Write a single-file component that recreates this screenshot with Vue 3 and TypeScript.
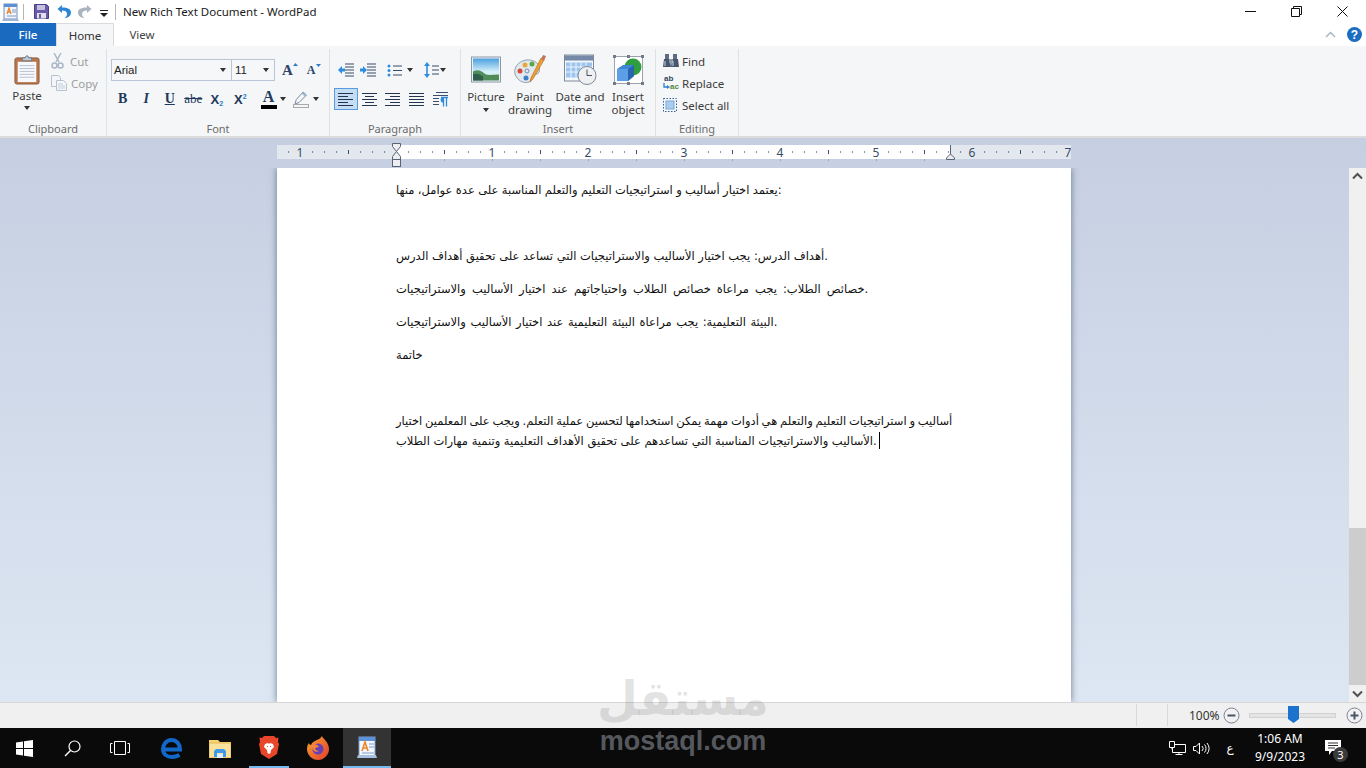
<script setup lang="ts">
const rulerX = (x: number) => x - 277
const numbers = [
  { n: 1, x: 300 }, { n: 1, x: 492 }, { n: 2, x: 588 }, { n: 3, x: 684 },
  { n: 4, x: 780 }, { n: 5, x: 876 }, { n: 6, x: 972 }, { n: 7, x: 1068 }
]
const dots: number[] = []
const longTicks: number[] = []
for (let x = 288; x < 1068; x += 12) {
  const rel = x - 396
  if (rel % 96 === 0) continue
  if (rel % 48 === 0) longTicks.push(x)
  else dots.push(x)
}
const tabStops: number[] = []
for (let x = 444; x < 950; x += 48) tabStops.push(x)
</script>

<template>
  <div class="app">
    <header class="titlebar">
      <svg class="appicon" width="17" height="18" viewBox="0 0 17 18">
        <rect x="2" y="1" width="13" height="15" fill="#f3f6fb" stroke="#6f8fc0" />
        <path d="M2 1h13v3H2z" fill="#5b8fd6" />
        <path d="M5 11l2-6 2 6M5.700 9h2.600" stroke="#e8862e" stroke-width="1.300" fill="none" />
        <path d="M10 7h4M10 9h4M5 13h9" stroke="#7d9cc8" />
        <path d="M1 16h15l1 2H0z" fill="#9db6d8" />
      </svg>
      <span class="qsep first"></span>
      <svg class="q-save" width="15" height="15" viewBox="0 0 15 15">
        <path d="M0.500 0.500h12l2 2v12h-14z" fill="#6a5aa8" stroke="#4a3d86" />
        <rect x="3" y="1" width="8" height="5" fill="#c5c0de" />
        <rect x="3" y="9" width="9" height="5.500" fill="#e1e1ea" />
        <rect x="5" y="10" width="2" height="4" fill="#6a5aa8" />
      </svg>
      <svg class="q-undo" width="14" height="15" viewBox="0 0 14 15">
        <path d="M5 1L0.500 5 5 9V6.400c3 0 5 1 5 3.600 0 1.700-1 3.200-2.500 4.200C11 14 14 12 14 8.600 14 5 10.600 3.600 5 3.600z" fill="#2f86d2" />
      </svg>
      <svg class="q-redo" width="14" height="15" viewBox="0 0 14 15">
        <path d="M9 1l4.500 4L9 9V6.400c-3 0-5 1-5 3.600 0 1.700 1 3.200 2.500 4.200C3 14 0 12 0 8.600 0 5 3.400 3.600 9 3.600z" fill="#a9b4c0" />
      </svg>
      <svg class="q-more" width="8" height="8" viewBox="0 0 8 8">
        <path d="M0 1h8v1H0zM0 4h8L4 8z" fill="#222" />
      </svg>
      <span class="qsep q2"></span>
      <span class="title">New Rich Text Document - WordPad</span>
      <div class="winctl">
        <span class="wbtn"><svg width="11" height="11" viewBox="0 0 11 11"><path d="M0 5.500h11" stroke="#111" /></svg></span>
        <span class="wbtn"><svg width="11" height="11" viewBox="0 0 11 11"><path d="M.5 2.500h8v8h-8zM2.500 2.500v-2h8v8h-2" stroke="#111" fill="none" /></svg></span>
        <span class="wbtn"><svg width="11" height="11" viewBox="0 0 11 11"><path d="M.5 .5l10 10M10.500 .5l-10 10" stroke="#111" /></svg></span>
      </div>
    </header>

    <nav class="tabs">
      <span class="tab file">File</span>
      <span class="tab home">Home</span>
      <span class="tab view">View</span>
      <svg class="collapse" width="11" height="7" viewBox="0 0 11 7"><path d="M1 6l4.500-4.500L10 6" stroke="#a9b4c4" stroke-width="1.500" fill="none" /></svg>
      <svg class="help" width="15" height="15" viewBox="0 0 15 15">
        <circle cx="7.500" cy="7.500" r="7.500" fill="#1b6dc1" />
        <text x="7.500" y="11.500" text-anchor="middle" class="helpq">?</text>
      </svg>
    </nav>

    <section class="ribbon">
      <div class="group g-clip">
        <div class="body clip-body">
          <div class="paste">
            <svg width="26" height="30" viewBox="0 0 28 31" preserveAspectRatio="none">
              <rect x="1" y="3" width="26" height="27" rx="2" fill="#b9764e" stroke="#8d5a3c" />
              <rect x="4" y="7" width="20" height="21" fill="#f7f8fb" />
              <path d="M6 11h16M6 14h16M6 17h16M6 20h16M6 23h16" stroke="#b5bfd2" />
              <path d="M9 6V3h3l1-2h2l1 2h3v3z" fill="#c4cad4" stroke="#6c7686" />
            </svg>
            <span class="lbl paste-lbl">Paste</span>
            <i class="arrow"></i>
          </div>
          <div class="clip-small">
            <div class="smallrow">
              <svg width="14" height="16" viewBox="0 0 14 16">
                <path d="M3 0l5 9M10 0L5 9" stroke="#aab7c8" stroke-width="1.500" />
                <circle cx="3.500" cy="12.500" r="2.500" fill="none" stroke="#aab7c8" stroke-width="1.500" />
                <circle cx="9.500" cy="12.500" r="2.500" fill="none" stroke="#aab7c8" stroke-width="1.500" />
              </svg>
              <span class="dis cut-t">Cut</span>
            </div>
            <div class="smallrow">
              <svg width="16" height="16" viewBox="0 0 16 16">
                <path d="M.5 .5h7l2 2v9h-9z" fill="#f4f6f9" stroke="#b7c2d0" />
                <path d="M5.500 5.500h7l3 3v7h-10z" fill="#f4f6f9" stroke="#b7c2d0" />
                <path d="M7 9h5M7 11h7M7 13h7" stroke="#c6d0dc" />
              </svg>
              <span class="dis copy-t">Copy</span>
            </div>
          </div>
        </div>
        <div class="glabel">Clipboard</div>
      </div>

      <div class="group g-font">
        <div class="body font-body">
          <div class="font-row">
            <div class="combo c-font"><span>Arial</span><i class="arrow"></i></div>
            <div class="combo c-size"><span>11</span><i class="arrow"></i></div>
            <span class="ab grow">A<svg width="5" height="3" viewBox="0 0 5 3"><path d="M0 3l2.500-3L5 3z" fill="#2b7cc9" /></svg></span>
            <span class="ab shrink">A<svg width="5" height="3" viewBox="0 0 5 3"><path d="M0 0l2.500 3L5 0z" fill="#2b7cc9" /></svg></span>
          </div>
          <div class="font-row row2">
            <span class="fb b">B</span>
            <span class="fb i">I</span>
            <span class="fb u">U</span>
            <span class="fb s">abe</span>
            <span class="fb x">X<small class="sub">2</small></span>
            <span class="fb x">X<small class="sup">2</small></span>
            <span class="colorA"><span class="cA">A</span><em class="cbar"></em></span>
            <i class="arrow a-c"></i>
            <svg class="high" width="17" height="17" viewBox="0 0 17 17">
              <path d="M10 1l3.500 3L6 11.500 2 13l1.200-4.300z" fill="#f3f5f8" stroke="#7c8da3" />
              <path d="M10 1l3.500 3-1.500 1.500L8.500 2.500z" fill="#9bb4d0" />
              <rect x=".5" y="13.500" width="15" height="3" fill="#f5f6f7" stroke="#a9a9a9" />
            </svg>
            <i class="arrow a-h"></i>
          </div>
        </div>
        <div class="glabel">Font</div>
      </div>

      <div class="group g-para">
        <div class="body para-body">
          <div class="para-row">
            <svg class="ic i1" width="16" height="14" viewBox="0 0 16 14">
              <path d="M7 1h9M7 4h9M7 7h9M7 10h9M7 13h9" stroke="#364b6b" />
              <path d="M0 7l4-4v2.500h3v3H4V11z" fill="#2d8ce0" />
            </svg>
            <svg class="ic i2" width="16" height="14" viewBox="0 0 16 14">
              <path d="M7 1h9M7 4h9M7 7h9M7 10h9M7 13h9" stroke="#364b6b" />
              <path d="M7 7L3 3v2.500H0v3h3V11z" fill="#2d8ce0" />
            </svg>
            <svg class="ic i3" width="15" height="13" viewBox="0 0 15 13">
              <circle cx="2" cy="2" r="1.500" fill="#2d8ce0" /><circle cx="2" cy="6.500" r="1.500" fill="#2d8ce0" /><circle cx="2" cy="11" r="1.500" fill="#2d8ce0" />
              <path d="M6 2h9M6 6.500h9M6 11h9" stroke="#364b6b" />
            </svg>
            <i class="arrow a-l"></i>
            <svg class="ic i4" width="15" height="16" viewBox="0 0 15 16">
              <path d="M3 0l3 4H0zM3 16l3-4H0z" fill="#2d8ce0" /><path d="M2.200 4h1.600v8H2.200z" fill="#2d8ce0" />
              <path d="M8 4h7M8 8h7M8 12h7" stroke="#364b6b" />
            </svg>
            <i class="arrow a-s"></i>
          </div>
          <div class="para-row row2">
            <span class="align active"><svg width="15" height="13" viewBox="0 0 15 13"><path d="M0 .5h15M0 3.500h10M0 6.500h15M0 9.500h10M0 12.500h15" stroke="#26354f" /></svg></span>
            <span class="align"><svg width="15" height="13" viewBox="0 0 15 13"><path d="M0 .5h15M3 3.500h9M0 6.500h15M3 9.500h9M0 12.500h15" stroke="#26354f" /></svg></span>
            <span class="align"><svg width="15" height="13" viewBox="0 0 15 13"><path d="M0 .5h15M5 3.500h10M0 6.500h15M5 9.500h10M0 12.500h15" stroke="#26354f" /></svg></span>
            <span class="align"><svg width="15" height="13" viewBox="0 0 15 13"><path d="M0 .5h15M0 3.500h15M0 6.500h15M0 9.500h15M0 12.500h15" stroke="#26354f" /></svg></span>
            <span class="align rtl"><svg width="15" height="15" viewBox="0 0 15 15"><path d="M3 .5h12M0 3.500h15M0 6.500h6M0 9.500h6M0 12.500h6" stroke="#3d4f6b" /><path d="M8 5.500h7M10.500 5.500v9M13.500 5.500v9M10.500 5.500a2 2 0 000 4.500" stroke="#2d8ce0" stroke-width="1.300" fill="#2d8ce0" /></svg></span>
          </div>
        </div>
        <div class="glabel">Paragraph</div>
      </div>

      <div class="group g-ins">
        <div class="body ins-body">
          <div class="big w44">
            <svg width="30" height="27" viewBox="0 0 30 27">
              <defs>
                <linearGradient id="sky" x1="0" y1="0" x2="0" y2="1"><stop offset="0" stop-color="#4a9fe0" /><stop offset=".6" stop-color="#d6f0f8" /></linearGradient>
              </defs>
              <rect x=".5" y=".5" width="29" height="25" fill="#eef1f5" stroke="#8c97a6" />
              <rect x="2" y="2" width="26" height="22" fill="url(#sky)" />
              <path d="M2 15c5-3 9 0 13 3 4 1 9 0 13 0v6H2z" fill="#4f8c5a" />
              <path d="M2 18c4-2 7 0 10 2v4H2z" fill="#2f5d4e" />
            </svg>
            <span class="lbl">Picture</span>
            <i class="arrow"></i>
          </div>
          <div class="big w44">
            <svg width="34" height="32" viewBox="0 0 34 32">
              <path d="M2 20C0 11 9 5 17 6c7 1 11 6 9 12-1 3-5 2-7 4-1 2 0 5-3 6-6 2-12-2-14-8z" fill="#e2e8ee" stroke="#8fa1b4" />
              <circle cx="7" cy="17" r="2.500" fill="#d4483a" /><circle cx="12" cy="11" r="2.500" fill="#e6a93a" /><circle cx="19" cy="10" r="2.500" fill="#5aa845" /><circle cx="13" cy="24" r="2.500" fill="#3f7ec9" /><circle cx="14" cy="17" r="2" fill="none" stroke="#6f8fb5" />
              <path d="M28 4L18 24l-1 4 3-3L31 6z" fill="#ef9f2d" stroke="#b6742a" stroke-width=".7" />
              <path d="M28 5l2-4 3 1-2 5z" fill="#c2775d" />
            </svg>
            <span class="lbl">Paint<br />drawing</span>
          </div>
          <div class="big w56">
            <svg width="33" height="31" viewBox="0 0 33 31">
              <rect x=".5" y=".5" width="29" height="26" fill="#f3f6fa" stroke="#7d8999" />
              <rect x="1" y="1" width="28" height="5" fill="#7589a8" />
              <path d="M2 8h26v15H2z" fill="#9cc4ee" />
              <path d="M2 12.500h26M2 17.500h26M7 8v15M12 8v15M17 8v15M22 8v15" stroke="#eef5fc" />
              <circle cx="23" cy="21" r="9" fill="#eef0f2" stroke="#7e8895" />
              <path d="M23 15v6h5" stroke="#46505e" fill="none" />
            </svg>
            <span class="lbl">Date and<br />time</span>
          </div>
          <div class="big w40">
            <svg width="31" height="30" viewBox="0 0 31 30">
              <rect x="1.500" y="1.500" width="28" height="27" fill="#fff" stroke="#9aa3ae" />
              <path d="M0 0h3v3H0zM28 0h3v3h-3zM0 27h3v3H0zM28 27h3v3h-3zM14 0h3v3h-3zM14 27h3v3h-3z" fill="#727b87" />
              <circle cx="20" cy="12" r="8.500" fill="#2f9e3f" />
              <path d="M4 14l6-4h11v11l-6 5H4z" fill="#3f86d8" />
              <path d="M4 14h11v12H4z" fill="#5c9fe6" />
              <path d="M15 14l6-4v11l-6 5z" fill="#2a64ae" />
            </svg>
            <span class="lbl">Insert<br />object</span>
          </div>
        </div>
        <div class="glabel">Insert</div>
      </div>

      <div class="group g-edit">
        <div class="body edit-body">
          <div class="edit-row">
            <svg width="16" height="14" viewBox="0 0 16 14">
              <rect x="2" y="0" width="4" height="5" fill="#5d6c80" /><rect x="10" y="0" width="4" height="5" fill="#5d6c80" />
              <path d="M1 5h6l1 8H0zM9 5h6l1 8H8z" fill="#46566c" /><path d="M6 5h4v4H6z" fill="#8b98a9" />
              <path d="M2 7v5M10 7v5" stroke="#c9d3de" />
            </svg>
            <span>Find</span>
          </div>
          <div class="edit-row">
            <span class="repl">
              <b class="r-ab">ab</b><b class="r-ac">ac</b>
              <svg class="r-arrow" width="7" height="7" viewBox="0 0 7 7"><path d="M1 0v4h3" stroke="#2d7fd0" stroke-width="1.300" fill="none" /><path d="M4 2l3 2-3 2z" fill="#2d7fd0" /></svg>
            </span>
            <span>Replace</span>
          </div>
          <div class="edit-row">
            <svg width="14" height="14" viewBox="0 0 14 14">
              <rect x=".5" y=".5" width="13" height="13" fill="none" stroke="#2d5f9e" stroke-dasharray="1.500 1.500" />
              <rect x="3" y="3" width="8" height="8" fill="#a8cdf0" stroke="#7ba7d5" />
            </svg>
            <span class="sel-t">Select all</span>
          </div>
        </div>
        <div class="glabel">Editing</div>
      </div>
    </section>

    <main class="workspace">
      <div class="ruler-row">
        <svg class="ruler" width="794" height="30" viewBox="0 0 794 30">
          <rect x="0" y="7" width="794" height="14" fill="#e3e7ee" />
          <rect x="119" y="7" width="554" height="14" fill="#fff" />
          <circle v-for="d in dots" :key="'d' + d" :cx="rulerX(d) + .5" cy="14" r=".7" fill="#4c5a73" />
          <rect v-for="t in longTicks" :key="'t' + t" :x="rulerX(t)" y="12" width="1" height="4" fill="#3c4c6a" />
          <rect v-for="s in tabStops" :key="'s' + s" :x="rulerX(s)" y="21" width="1" height="2" fill="#9aa6b8" />
          <text v-for="(m, i) in numbers" :key="'n' + i" :x="rulerX(m.x)" y="18.500" text-anchor="middle" class="rnum">{{ m.n }}</text>
          <path d="M115.500 5.500h8v3l-4 5-4-5zM119.500 13.500l4 5v3h-8v-3z" fill="#eceef2" stroke="#586374" />
          <rect x="115.500" y="21.500" width="8" height="7" fill="#eceef2" stroke="#586374" />
          <path d="M673.500 7v9l4 4v1.500h-8V20l4-4" fill="#eceef2" stroke="#586374" />
        </svg>
      </div>
      <div class="doc-row">
        <div class="doc-area">
          <article class="page">
            <p class="l1">يعتمد اختيار أساليب و استراتيجيات التعليم والتعلم المناسبة على عدة عوامل، منها:</p>
            <p>&nbsp;</p>
            <p>أهداف الدرس: يجب اختيار الأساليب والاستراتيجيات التي تساعد على تحقيق أهداف الدرس.</p>
            <p class="l3">خصائص الطلاب: يجب مراعاة خصائص الطلاب واحتياجاتهم عند اختيار الأساليب والاستراتيجيات.</p>
            <p class="l4">البيئة التعليمية: يجب مراعاة البيئة التعليمية عند اختيار الأساليب والاستراتيجيات.</p>
            <p>خاتمة</p>
            <p>&nbsp;</p>
            <p class="last"><span class="l6">أساليب و استراتيجيات التعليم والتعلم هي أدوات مهمة يمكن استخدامها لتحسين عملية التعلم. ويجب على المعلمين اختيار</span><br />الأساليب والاستراتيجيات المناسبة التي تساعدهم على تحقيق الأهداف التعليمية وتنمية مهارات الطلاب.<i class="caret"></i></p>
          </article>
        </div>
        <aside class="vscroll">
          <svg width="17" height="17" viewBox="0 0 17 17"><path d="M4 10.500l4.500-4.500 4.500 4.500" stroke="#505050" stroke-width="2" fill="none" /></svg>
          <div class="track"><div class="thumb"></div></div>
          <svg width="17" height="17" viewBox="0 0 17 17"><path d="M4 6.500l4.500 4.500 4.500-4.500" stroke="#505050" stroke-width="2" fill="none" /></svg>
        </aside>
      </div>
    </main>

    <footer class="status">
      <span class="sdiv d1"></span>
      <span class="sdiv d2"></span>
      <span class="zoomtxt">100%</span>
      <svg class="zbtn" width="17" height="17" viewBox="0 0 17 17"><circle cx="8.500" cy="8.500" r="7.500" fill="#f2f2f4" stroke="#7c8290" /><path d="M4.500 8.500h8" stroke="#4a5464" stroke-width="2" /></svg>
      <div class="slider"><svg class="sthumb" width="11" height="17" viewBox="0 0 11 17"><path d="M0 0h11v13l-5.500 4L0 13z" fill="#1c73cd" /></svg></div>
      <svg class="zbtn" width="17" height="17" viewBox="0 0 17 17"><circle cx="8.500" cy="8.500" r="7.500" fill="#f2f2f4" stroke="#7c8290" /><path d="M4.500 8.500h8M8.500 4.500v8" stroke="#4a5464" stroke-width="2" /></svg>
    </footer>

    <div class="taskbar">
      <span class="tb start">
        <svg width="17" height="17" viewBox="0 0 17 17"><path d="M0 2.500L7 1.400V8H0zM8 1.300L17 0v8H8zM0 9h7v6.600L0 14.500zM8 9h9v8l-9-1.300z" fill="#fff" /></svg>
      </span>
      <span class="tb">
        <svg width="17" height="17" viewBox="0 0 17 17"><circle cx="10.500" cy="6.500" r="5.500" fill="none" stroke="#fff" stroke-width="1.200" /><path d="M6.500 10.500L1 16" stroke="#fff" stroke-width="1.500" /></svg>
      </span>
      <span class="tb">
        <svg width="20" height="14" viewBox="0 0 20 14"><path d="M4.500 .5h11v13h-11z" fill="none" stroke="#fff" /><path d="M2.500 2.500H.5v9h2M17.500 2.500h2v9h-2" fill="none" stroke="#fff" /></svg>
      </span>
      <span class="tb t-edge">
        <svg width="21" height="22" viewBox="0 0 21 22"><path d="M4 12.500h15C19 7 15.500 3 10.500 3 5 3 2 8 2 12c0 5.500 4 8 9 8 3 0 5.500-1 7.500-2" fill="none" stroke="#1168c8" stroke-width="4" /></svg>
      </span>
      <span class="tb t-exp">
        <svg width="22" height="19" viewBox="0 0 22 19">
          <path d="M0 1h9l2 2h11v16H0z" fill="#f6d271" />
          <rect x="0" y="4" width="22" height="15" fill="#fbe29c" stroke="#e6b84f" />
          <path d="M5 18v-6l2-2h8l2 2v6h-3v-4H8v4z" fill="#3f9be8" />
          <rect x="8" y="15" width="6" height="4" fill="#dfeffb" />
        </svg>
      </span>
      <span class="tb run">
        <svg width="20" height="24" viewBox="0 0 20 24">
          <path d="M5 1h10l2 2 2.500-.5L19 7l1 2-2 10-8 5-8-5L0 9l1-2-.5-4.500L3 3z" fill="#e8462a" />
          <path d="M6 9l3-1 1 1 1-1 3 1 1 3-3 3-.5 3L10 19l-1.500-1-.5-3-3-3z" fill="#fff" />
          <path d="M8 11l1 1M12 11l-1 1" stroke="#e8462a" />
        </svg>
      </span>
      <span class="tb t-fx">
        <svg width="24" height="24" viewBox="0 0 24 24">
          <defs><linearGradient id="fx" x1="0" y1="0" x2="1" y2="1"><stop offset="0" stop-color="#f9a52c" /><stop offset="1" stop-color="#e23d2d" /></linearGradient></defs>
          <path d="M16 0c1 3 7 6 7 13 0 6-5 11-11 11S1 19 1 13c0-3 1-5 2-6 0 1 1 2 2 2 1-3 4-4 6-5 2-1 4-2 5-4z" fill="url(#fx)" />
          <circle cx="12" cy="13" r="5.500" fill="#6a3fb5" />
          <path d="M6 9c3-2 6 0 7 2-2 0-3 1-4 1 0 2 2 3 4 3-3 2-7 0-7-6z" fill="#f7873a" />
        </svg>
      </span>
      <span class="tb active">
        <svg width="20" height="22" viewBox="0 0 20 22">
          <rect x="2" y="1" width="16" height="19" fill="#f3f6fb" stroke="#7d9dcb" />
          <path d="M2 1h16v4H2z" fill="#5e92d8" />
          <path d="M5 15l3-9 3 9M6 12h4" stroke="#e8862e" stroke-width="1.600" fill="none" />
          <path d="M12 8h5M12 11h5M5 17h12" stroke="#7d9cc8" />
          <path d="M1 19h18l1 3H0z" fill="#a8c0df" />
        </svg>
      </span>
      <div class="tray">
        <svg class="t-net" width="17" height="14" viewBox="0 0 17 14"><path d="M3.500 3.500h13v8h-13zM10 11.500v2M6.500 13.500h7" fill="none" stroke="#fff" /><path d="M.5 .5h5v6h-5zM3 6.500v2" fill="#0a0a0a" stroke="#fff" /></svg>
        <svg class="t-vol" width="17" height="13" viewBox="0 0 17 13"><path d="M.5 4.500h2.500L6.500 1v11L3 8.500H.5z" fill="none" stroke="#fff" /><path d="M9 4a3.500 3.500 0 010 5M11.500 2.500a6 6 0 010 8M14 1a9 9 0 010 11" fill="none" stroke="#fff" /></svg>
        <span class="t-lang">ع</span>
        <div class="clock"><span>1:06 AM</span><span>9/9/2023</span></div>
        <div class="notif">
          <svg width="16" height="15" viewBox="0 0 16 15"><path d="M0 0h16v11H7l-3 4v-4H0z" fill="#fff" /><path d="M3 3h10M3 5.500h10M3 8h7" stroke="#333" /></svg>
          <span class="badge">3</span>
        </div>
      </div>
    </div>

    <div class="wm">
      <span class="wm-ar">مستقل</span>
      <span class="wm-en">mostaql.com</span>
    </div>
  </div>
</template>

<style scoped>
.app {
  position: relative;
  width: 1366px;
  height: 768px;
  display: flex;
  flex-direction: column;
  overflow: hidden;
  background: #fff;
  font-family: "Noto Sans", "Open Sans", sans-serif;
  font-size: 11.500px;
  color: #3c3c3c;
}
i, em { display: block; font-style: normal; }
.titlebar { height: 23px; display: flex; align-items: center; flex: none; background: #fff; }
.appicon { margin-left: 2px; }
.qsep { width: 1px; height: 16px; background: #b5b5b5; margin-left: 8px; }
.qsep.first { margin-left: 4px; }
.qsep.q2 { margin-left: 7px; }
.q-save { margin-left: 10px; }
.q-undo { margin-left: 8px; }
.q-redo { margin-left: 7px; }
.q-more { margin-left: 8px; margin-top: 3px; }
.title { margin-left: 7px; font-size: 11.500px; color: #1a1a1a; white-space: nowrap; }
.winctl { margin-left: auto; display: flex; padding-right: 1px; }
.wbtn { width: 46px; height: 23px; display: flex; align-items: center; justify-content: center; }

.tabs { height: 23px; display: flex; align-items: stretch; flex: none; background: #fff; position: relative; }
.tab { display: flex; align-items: center; justify-content: center; font-size: 11.500px; }
.file { width: 56px; background: #1a6bc0; color: #fff; font-weight: 500; }
.home { width: 58px; background: #f5f6f7; border: 1px solid #dadbdc; border-bottom: 0; box-sizing: border-box; color: #333; }
.view { width: 56px; color: #444; }
.collapse { margin-left: auto; align-self: center; margin-right: 11px; }
.help { align-self: center; margin-right: 4px; }
.helpq { font: bold 12px "Liberation Sans", sans-serif; fill: #fff; }

.ribbon {
  height: 92px;
  flex: none;
  display: flex;
  background: #f5f6f7;
  border-bottom: 2px solid #dcdcdc;
  box-sizing: border-box;
}
.group { display: flex; flex-direction: column; box-sizing: border-box; border-right: 1px solid #e0e1e3; margin-top: 3px; }
.g-clip { width: 107px; }
.g-font { width: 223px; }
.g-para { width: 131px; }
.g-ins { width: 195px; }
.g-edit { width: 83px; }
.body { flex: 1; min-height: 0; }
.glabel { height: 14px; line-height: 14px; text-align: center; color: #6c6c6c; font-size: 11px; white-space: nowrap; }
.arrow { width: 0; height: 0; border-left: 3.500px solid transparent; border-right: 3.500px solid transparent; border-top: 4px solid #333; }
.lbl { line-height: 13px; text-align: center; white-space: nowrap; color: #3c3c3c; }

.clip-body { display: flex; padding-left: 8px; }
.paste { width: 38px; display: flex; flex-direction: column; align-items: center; padding-top: 6px; }
.paste-lbl { margin-top: 4px; }
.paste .arrow { margin-top: 4px; }
.clip-small { margin-left: 5px; padding-top: 4px; display: flex; flex-direction: column; gap: 6px; }
.smallrow { display: flex; align-items: center; gap: 4px; height: 16px; }
.dis { color: #9d9d9d; }
.cut-t { margin-left: 1px; }

.font-body { padding: 10px 0 0 4px; display: flex; flex-direction: column; gap: 7px; }
.font-row { display: flex; align-items: center; height: 22px; }
.combo {
  height: 22px; box-sizing: border-box; border: 1px solid #b9c4d6; background: #f6f7f8;
  display: flex; align-items: center; justify-content: space-between; padding: 0 5px 0 2px;
  font: 11.500px "Liberation Sans", sans-serif; color: #222;
}
.c-font { width: 121px; }
.c-size { width: 43px; border-left: 0; padding-left: 3px; }
.ab { font: bold 15px "Liberation Serif", serif; color: #2c4468; display: flex; align-items: flex-start; }
.ab svg { margin-top: 1px; }
.grow { margin-left: 7px; }
.shrink { margin-left: 9px; font-size: 12px; }
.fb { width: 23.500px; flex: none; text-align: center; font: 13px "Liberation Serif", serif; color: #21395c; }
.fb.b { font-weight: bold; font-size: 14px; }
.fb.i { font-style: italic; font-weight: bold; font-size: 14px; }
.fb.u { font-weight: bold; text-decoration: underline; font-size: 14px; }
.fb.s { text-decoration: line-through; font-size: 13px; }
.fb.x { font-weight: bold; font-family: "Liberation Sans", sans-serif; font-size: 13px; }
.sub, .sup { font-size: 7px; color: #2b7cc9; position: relative; }
.sub { top: 2px; }
.sup { top: -5px; }
.colorA { margin-left: 8px; width: 17px; display: flex; flex-direction: column; align-items: center; }
.cA { font: bold 16px/15px "Liberation Serif", serif; color: #21395c; }
.cbar { width: 16px; height: 4px; background: #000; margin-top: 1px; }
.a-c { margin-left: 3px; }
.high { margin-left: 7px; }
.a-h { margin-left: 3px; }

.para-body { padding: 10px 0 0 4px; display: flex; flex-direction: column; gap: 7px; }
.para-row { display: flex; align-items: center; height: 22px; }
.i1 { margin-left: 4px; }
.i2 { margin-left: 6px; }
.i3 { margin-left: 11px; }
.a-l { margin-left: 5px; }
.i4 { margin-left: 11px; }
.a-s { margin-left: 1px; }
.align { width: 23.500px; height: 22px; flex: none; display: flex; align-items: center; justify-content: center; box-sizing: border-box; }
.align.active { background: #c5dcf5; border: 1px solid #5a9bdc; }
.align.rtl { margin-left: 1px; }

.ins-body { display: flex; padding-left: 3px; }
.big { display: flex; flex-direction: column; align-items: center; height: 72px; justify-content: flex-start; }
.big svg { height: 32px; flex: none; margin-top: 5px; }
.big .lbl { margin-top: 4px; }
.big .arrow { margin-top: 5px; }
.w44 { width: 44px; }
.w56 { width: 56px; }
.w40 { width: 40px; }

.edit-body { padding: 4px 0 0 7px; display: flex; flex-direction: column; gap: 6px; }
.edit-row { height: 16px; display: flex; align-items: center; gap: 3px; color: #3c3c3c; white-space: nowrap; }
.sel-t { margin-left: 2px; }
.repl { width: 16px; height: 16px; position: relative; font: bold 8px/8px "Liberation Sans", sans-serif; flex: none; }
.r-ab { position: absolute; left: 1px; top: 0; color: #33475f; }
.r-ac { position: absolute; left: 7px; top: 8px; color: #4f8a3c; }
.r-arrow { position: absolute; left: 0; top: 8px; }

.workspace {
  flex: 1; min-height: 0; display: flex; flex-direction: column;
  background: linear-gradient(#c5cfe1, #dde7f3);
}
.ruler-row { height: 30px; flex: none; display: flex; padding-left: 277px; }
.ruler { display: block; }
.rnum { font: 12px "Noto Sans", sans-serif; fill: #3a4a66; }
.doc-row { flex: 1; min-height: 0; display: flex; }
.doc-area { flex: 1; display: flex; justify-content: center; min-width: 0; overflow: hidden; padding-right: 1px; }
.page {
  width: 794px; box-sizing: border-box; background: #fff;
  padding: 12px 0 0 119px;
  box-shadow: 0 0 7px rgba(70, 85, 115, .75);
  font-family: "DejaVu Sans", "Liberation Sans", sans-serif;
  font-size: 11.500px; color: #111; direction: ltr;
}
.page p { margin: 0 0 13px; line-height: 20px; white-space: nowrap; }
.page .l1 { word-spacing: -.25px; }
.page .l3 { word-spacing: 2.400px; }
.page .l4 { word-spacing: .9px; }
.page .l6 { word-spacing: -.9px; }
.caret { display: inline-block; width: 1px; height: 17px; background: #000; vertical-align: -4px; margin-left: 2px; }
.vscroll { width: 17px; flex: none; background: #f0f0f0; display: flex; flex-direction: column; }
.track { flex: 1; position: relative; }
.thumb { position: absolute; left: 0; right: 0; top: 343px; bottom: 0; background: #cdcdcd; }

.status { height: 26px; flex: none; background: #f0f0f0; border-top: 1px solid #d6d6d6; box-sizing: border-box; display: flex; align-items: center; position: relative; color: #333; }
.sdiv { position: absolute; top: 1px; bottom: 2px; width: 1px; background: #d9d9d9; }
.d1 { left: 1136px; }
.d2 { left: 1167px; }
.zoomtxt { margin-left: 1189px; font-size: 12px; width: 34px; }
.slider { width: 85px; height: 3px; background: #e4e4e4; border: 1px solid #d2d2d2; margin: 0 10px 0 9px; position: relative; box-sizing: content-box; }
.sthumb { position: absolute; left: 38px; top: -8px; }

.taskbar { height: 40px; flex: none; background: #0a0a0a; display: flex; align-items: center; position: relative; }
.tb { width: 48px; height: 40px; flex: none; display: flex; align-items: center; justify-content: center; box-sizing: border-box; }
.t-edge { margin-left: 3px; }
.t-exp { margin-left: 1px; }
.tb.run { width: 40px; margin-left: 5px; border-bottom: 2px solid #76b9ed; }
.t-fx { margin-left: 5px; }
.tb.active { background: #333; border-bottom: 2px solid #76b9ed; margin-left: 1px; }
.tray { margin-left: auto; display: flex; align-items: center; color: #fff; height: 40px; }
.t-net { margin-right: 7px; }
.t-vol { margin-right: 13px; }
.t-lang { font: 12px "DejaVu Sans", sans-serif; width: 14px; text-align: center; }
.clock { width: 76px; margin-left: 5px; display: flex; flex-direction: column; align-items: center; font-size: 12px; line-height: 18px; }
.notif { width: 48px; height: 40px; position: relative; }
.notif svg { position: absolute; left: 7px; top: 12px; }
.badge { position: absolute; left: 15px; top: 19px; width: 15px; height: 15px; border-radius: 50%; background: #3a3a3a; text-align: center; font-size: 11px; line-height: 15px; color: #fff; }

.wm { position: absolute; left: 583px; top: 669px; width: 200px; display: flex; flex-direction: column; align-items: center; pointer-events: none; }
.wm-ar { font: bold 47px/60px "DejaVu Sans", sans-serif; color: rgba(110, 110, 110, .2); }
.wm-en { font: bold 27px/24px "Liberation Sans", sans-serif; color: #55585d; }
</style>
